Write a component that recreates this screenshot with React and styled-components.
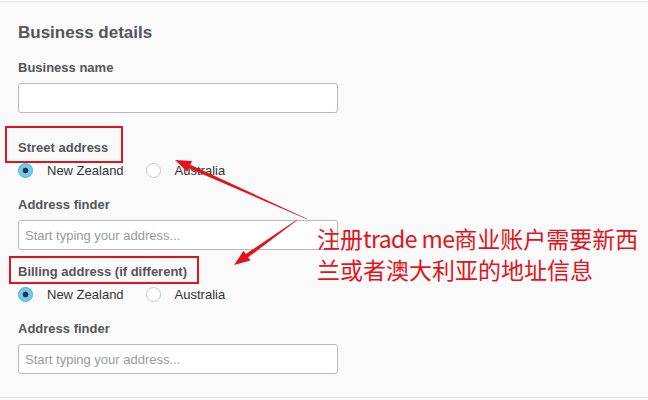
import React from "react";
import styled, { createGlobalStyle } from "styled-components";

const Global = createGlobalStyle`
  html, body { margin: 0; padding: 0; background: #ffffff; }
  body { font-family: "Liberation Sans", Arial, sans-serif; }
`;

const Page = styled.div`
  position: relative;
  margin-top: 1px;
  height: 395px;
  border-top: 1px solid #e3e3e5;
  border-bottom: 1px solid #e3e3e5;
  background: #fafafb;
  overflow: hidden;
`;

const Form = styled.div`
  display: flex;
  flex-direction: column;
  padding: 21px 0 0 18px;
`;

const Heading = styled.h2`
  margin: 0 0 17px;
  font-size: 17px;
  line-height: 20px;
  font-weight: bold;
  color: #555558;
`;

const Label = styled.div`
  margin-top: ${(p) => p.$top || 0}px;
  font-size: 13px;
  line-height: 16px;
  font-weight: bold;
  color: #555558;
`;

const Input = styled.input`
  box-sizing: border-box;
  width: 320px;
  height: 30px;
  margin-top: 7px;
  padding: 0 6px;
  border: 1px solid #b9b9bc;
  border-radius: 3px;
  background: #ffffff;
  font-family: "Liberation Sans", Arial, sans-serif;
  font-size: 13px;
  color: #333;
  outline: none;
  &::placeholder { color: #9a9a9c; }
`;

const RadioRow = styled.div`
  display: flex;
  align-items: center;
  height: 20px;
  margin-top: 4px;
`;

const RadioOption = styled.label`
  display: flex;
  align-items: center;
  gap: 14px;
  margin-right: 22px;
  font-size: 13px;
  color: #333336;
`;

const Radio = styled.span`
  box-sizing: border-box;
  width: 15px;
  height: 15px;
  border-radius: 50%;
  border: 1px solid ${(p) => (p.$checked ? "#49aed3" : "#c9c9cc")};
  background: ${(p) =>
    p.$checked
      ? "radial-gradient(circle, #2f3336 0 2.6px, #6fcdeb 3.2px)"
      : "#ffffff"};
`;

const RedBox = styled.div`
  position: absolute;
  box-sizing: border-box;
  left: ${(p) => p.$x}px;
  top: ${(p) => p.$y}px;
  width: ${(p) => p.$w}px;
  height: ${(p) => p.$h}px;
  border: 2.5px solid #e3131b;
`;

const Arrows = styled.svg`
  position: absolute;
  left: 0;
  top: -2px;
  width: 648px;
  height: 400px;
  pointer-events: none;
`;

const Note = styled.div`
  position: absolute;
  left: 317px;
  top: 221px;
  font-family: "Noto Sans CJK SC", "Noto Sans", sans-serif;
  font-size: 23px;
  line-height: 31px;
  color: #e3131b;
  white-space: nowrap;
`;

const Latin = styled.span`
  letter-spacing: -0.6px;
`;

const RadioGroup = () => (
  <RadioRow>
    <RadioOption>
      <Radio $checked />
      New Zealand
    </RadioOption>
    <RadioOption>
      <Radio />
      Australia
    </RadioOption>
  </RadioRow>
);

export default function App() {
  return (
    <>
      <Global />
      <Page>
        <Form>
          <Heading>Business details</Heading>
          <Label>Business name</Label>
          <Input />
          <Label $top={27}>Street address</Label>
          <RadioGroup />
          <Label $top={17}>Address finder</Label>
          <Input placeholder="Start typing your address..." />
          <Label $top={14}>Billing address (if different)</Label>
          <RadioGroup />
          <Label $top={17}>Address finder</Label>
          <Input placeholder="Start typing your address..." />
        </Form>

        <RedBox $x={5} $y={124} $w={118} $h={37} />
        <RedBox $x={9} $y={254} $w={190} $h={28} />

        <Arrows viewBox="0 0 648 400">
          <polygon
            fill="#e3131b"
            points="307.1,218.7 190.4,164.7 192.1,161.0 175,160 187.2,172.0 188.8,168.3 306.9,219.3"
          />
          <polygon
            fill="#e3131b"
            points="297.2,220.2 248.2,257.3 250.5,260.6 234,265 243.5,250.8 245.8,254.1 296.8,219.8"
          />
        </Arrows>

        <Note>
          注册<Latin>trade me</Latin>商业账户需要新西
          <br />
          兰或者澳大利亚的地址信息
        </Note>
      </Page>
    </>
  );
}
